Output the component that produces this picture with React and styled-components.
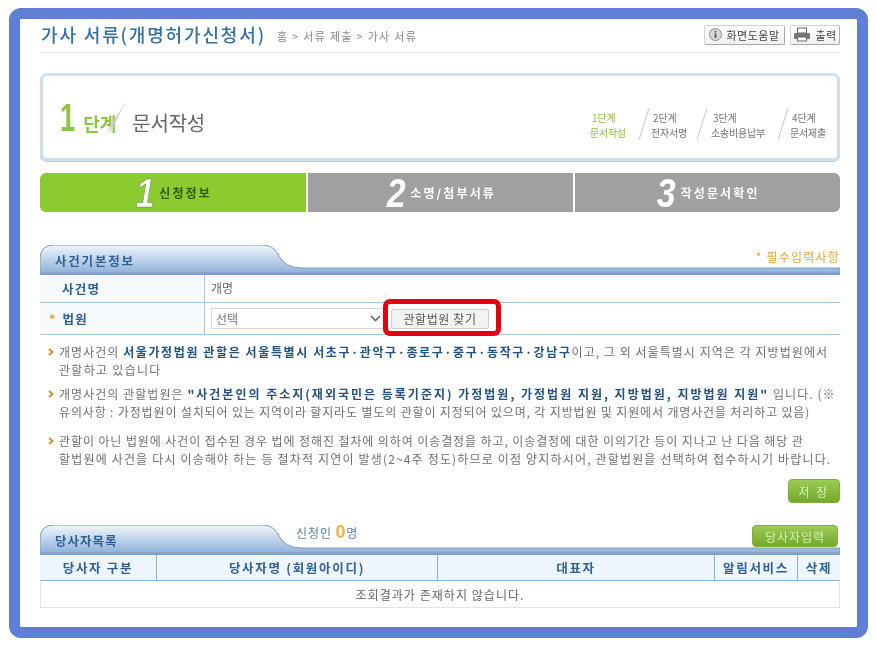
import React from 'react';
import styled, { createGlobalStyle } from 'styled-components';

const FONT = `"Noto Sans CJK KR", "Liberation Sans", sans-serif`;

const GlobalStyle = createGlobalStyle`
    body {
        margin: 0;
        background: #fff;
        font-family: ${FONT};
        overflow: hidden;
    }
`;

const Frame = styled.div`
    box-sizing: border-box;
    width: 859px;
    height: 630px;
    margin: 8px 0 0 9px;
    padding: 0 17px 0 20px;
    border: 11px solid #5f7fd6;
    border-radius: 12px;
    background: #fff;
    position: relative;
    filter: blur(0.4px);
`;

const Header = styled.header`
    display: flex;
    align-items: center;
    height: 33px;
    border-bottom: 1px solid #e6e6e6;
`;

const Title = styled.h1`
    margin: 0 0 4px 1px;
    font-size: 18px;
    font-weight: 500;
    line-height: 26px;
    letter-spacing: 1.85px;
    color: #35719f;
    white-space: nowrap;
`;

const Crumb = styled.span`
    margin-left: 11px;
    font-size: 11px;
    letter-spacing: 1.3px;
    color: #8a8a8a;
    white-space: nowrap;
`;

const HeadButtons = styled.div`
    display: flex;
    gap: 5px;
    margin: 0 0 2px auto;
`;

const HeadButton = styled.button`
    display: flex;
    align-items: center;
    justify-content: center;
    gap: 4px;
    box-sizing: border-box;
    width: ${p => p.$w}px;
    height: 20px;
    padding: 0;
    border: 1px solid #d4d4d4;
    border-right-color: #aaa;
    border-bottom-color: #aaa;
    border-radius: 2px;
    background: linear-gradient(#fff, #f1f1f1);
    font-family: ${FONT};
    font-size: 11px;
    letter-spacing: 0.5px;
    color: #444;
`;

const StepBox = styled.section`
    box-sizing: border-box;
    display: flex;
    justify-content: space-between;
    align-items: center;
    height: 88px;
    margin-top: 20px;
    border: 3px solid #d0e0ec;
    border-radius: 7px;
    background: #fff;
    box-shadow: 0 1px 1px #b9c9d6;
`;

const StepTitle = styled.div`
    display: flex;
    align-items: baseline;
    margin: 2px 0 0 14px;
    position: relative;
`;

const StepNum = styled.span`
    font-family: "Liberation Sans", sans-serif;
    font-size: 38px;
    font-weight: 700;
    color: #8cc63f;
    transform: scaleX(0.72);
    line-height: 40px;
`;

const StepWord = styled.span`
    margin-left: 5px;
    font-size: 18px;
    font-weight: 700;
    letter-spacing: 0;
    color: #8cc63f;
`;

const StepName = styled.span`
    margin-left: 16px;
    font-size: 20px;
    letter-spacing: -0.2px;
    color: #666;
`;

const SlashMark = styled.svg`
    position: absolute;
    left: ${p => p.$x}px;
    top: ${p => p.$y}px;
`;

const StepList = styled.ol`
    display: flex;
    margin: 16px 11px 0 0;
    padding: 0;
    list-style: none;
`;

const StepItem = styled.li`
    position: relative;
    margin-left: ${p => p.$ml}px;
    font-size: 10px;
    line-height: 15px;
    letter-spacing: -0.2px;
    white-space: nowrap;
    color: ${p => (p.$on ? '#8cc63f' : '#777')};
`;

const Tabs = styled.nav`
    display: grid;
    grid-template-columns: 266px 265px 265px;
    gap: 2px;
    height: 39px;
    margin-top: 12px;
`;

const Tab = styled.div`
    display: flex;
    align-items: center;
    justify-content: center;
    gap: 3px;
    background: ${p => (p.$on ? '#8ccb2e' : '#a0a0a0')};
    border-radius: ${p => p.$radius};
    color: ${p => (p.$on ? '#2e5a12' : '#fff')};
    font-size: 12px;
    font-weight: 700;
    letter-spacing: 2.1px;
`;

const TabNum = styled.span`
    font-family: "Liberation Sans", sans-serif;
    font-size: 40px;
    font-weight: 700;
    font-style: italic;
    letter-spacing: 0;
    color: #fff;
    -webkit-text-stroke: ${p => (p.$on ? '0.5px #56803a' : '0')};
    line-height: 38px;
    transform: scaleX(0.85);
`;

const SectionHead = styled.div`
    position: relative;
    display: flex;
    align-items: flex-start;
    height: 30px;
    margin-top: ${p => p.$mt}px;
`;

const HeadShape = styled.svg`
    position: absolute;
    left: 0;
    top: 0;
`;

const SectionTitle = styled.h2`
    position: relative;
    width: 256px;
    margin: 6px 0 0;
    padding-left: 15px;
    box-sizing: border-box;
    font-size: 12.5px;
    font-weight: 700;
    line-height: 20px;
    letter-spacing: ${p => p.$ls}px;
    color: #2d6193;
`;

const Required = styled.span`
    position: relative;
    margin: 3px 0 0 auto;
    font-size: 12px;
    line-height: 18px;
    letter-spacing: 1.2px;
    color: #e5a52e;
`;

const Count = styled.span`
    position: relative;
    margin-top: -2px;
    font-size: 12px;
    line-height: 18px;
    letter-spacing: 0.9px;
    color: #5b7f9b;
`;

const CountNum = styled.b`
    font-family: "Liberation Sans", sans-serif;
    font-size: 18px;
    color: #f0b040;
`;

const GreenButton = styled.button`
    position: relative;
    box-sizing: border-box;
    width: ${p => p.$w}px;
    height: ${p => p.$h}px;
    margin-left: ${p => p.$ml || 0};
    margin-right: ${p => p.$mr || 0}px;
    padding: 0;
    border: 1px solid #7fae3c;
    border-radius: 4px;
    background: linear-gradient(#9ccb56, #72aa2c);
    font-family: ${FONT};
    font-size: 12px;
    letter-spacing: ${p => p.$ls}px;
    color: #d8efb0;
`;

const InfoRow = styled.div`
    display: grid;
    grid-template-columns: 165px 1fr;
    height: ${p => p.$h}px;
    border-bottom: 1px solid ${p => p.$line};
    box-sizing: border-box;
`;

const InfoLabel = styled.div`
    display: flex;
    align-items: center;
    padding-left: ${p => (p.$mark ? 9 : 22)}px;
    border-right: 1px solid #a9c3da;
    background: #f8fbfe;
    font-size: 12.5px;
    font-weight: 700;
    letter-spacing: 1.2px;
    color: #2d6193;
`;

const Mark = styled.span`
    margin-right: 6px;
    color: #e8a33a;
`;

const InfoValue = styled.div`
    position: relative;
    display: flex;
    align-items: center;
    padding: 0 0 ${p => p.$pb || 0}px 6px;
    font-size: 12px;
    color: #666;
`;

const FakeSelect = styled.div`
    display: flex;
    align-items: center;
    justify-content: space-between;
    box-sizing: border-box;
    width: 174px;
    height: 21px;
    padding: 0 3px 0 4px;
    border: 1px solid #d6d6d6;
    font-size: 12px;
    color: #777;
`;

const FindButton = styled.button`
    box-sizing: border-box;
    width: 98px;
    height: 20px;
    margin-left: 6px;
    padding: 0;
    border: 1px solid #ccc;
    border-radius: 2px;
    background: #f3f3f1;
    font-family: ${FONT};
    font-size: 12px;
    letter-spacing: 0.6px;
    color: #555;
`;

const RedBox = styled.div`
    position: absolute;
    left: 178px;
    top: -4px;
    width: 118px;
    height: 37px;
    box-sizing: border-box;
    border: 5px solid #e4000f;
    border-radius: 7px;
`;

const Notes = styled.ul`
    margin: 0;
    padding: 8px 0 0;
    list-style: none;
`;

const Note = styled.li`
    position: relative;
    margin-bottom: ${p => p.$gap}px;
    padding-left: 19px;
    font-size: 12px;
    line-height: 17.5px;
    white-space: nowrap;
    color: #707070;

    b {
        font-weight: 700;
        letter-spacing: ${p => p.$bold}px;
        color: #24527f;
    }
`;

const Line = styled.span`
    display: block;
    letter-spacing: ${p => p.$ls}px;
`;

const Chevron = styled.svg`
    position: absolute;
    left: 8px;
    top: 5px;
`;

const Actions = styled.div`
    display: flex;
    justify-content: flex-end;
    margin-top: 12px;
`;

const ListRow = styled.div`
    display: grid;
    grid-template-columns: 117px 281px 277px 83px 42px;
    box-sizing: border-box;
    height: 26px;
    background: #eef5fc;
    border-bottom: 1px solid #8db0d2;
`;

const ListHead = styled.div`
    display: flex;
    align-items: center;
    justify-content: center;
    border-right: ${p => (p.$last ? 'none' : '1px solid #8db0d2')};
    font-size: 12.5px;
    font-weight: 700;
    letter-spacing: 1.7px;
    color: #2d6193;
`;

const EmptyRow = styled.div`
    display: flex;
    align-items: center;
    justify-content: center;
    box-sizing: border-box;
    height: 27px;
    border: 1px solid #e4e4e4;
    border-top: none;
    font-size: 12px;
    letter-spacing: 1.05px;
    color: #666;
`;

const Shape = ({ id }) => (
    <HeadShape width="800" height="30" viewBox="0 0 800 30">
        <defs>
            <linearGradient id={id} x1="0" y1="0" x2="0" y2="1">
                <stop offset="0" stopColor="#f1f6fb" />
                <stop offset="1" stopColor="#8fb1d9" />
            </linearGradient>
        </defs>
        <path
            d="M0 28V14Q0 0 14 0H222Q233 0 238 9Q244 23 262 23H800V28Z"
            fill={`url(#${id})`}
            stroke="#7d9fc4"
            strokeWidth="1"
        />
        <rect x="0" y="28" width="800" height="2" fill="#7c9fcc" />
    </HeadShape>
);

const Slash = ({ x, y, w = 12, h = 32, color = '#c9c9c9' }) => (
    <SlashMark $x={x} $y={y} width={w} height={h} viewBox={`0 0 ${w} ${h}`}>
        <line x1={w - 1} y1="0" x2="1" y2={h} stroke={color} strokeWidth="1" />
    </SlashMark>
);

// the soft grey stroke between 단계 and 문서작성
const TitleSlash = () => (
    <SlashMark $x={46} $y={0} width="26" height="38" viewBox="0 0 26 38">
        <defs>
            <linearGradient id="titleSlash" x1="0" y1="0" x2="0" y2="1">
                <stop offset="0" stopColor="#ececec" />
                <stop offset="0.7" stopColor="#c8c8c8" />
                <stop offset="1" stopColor="#fff" />
            </linearGradient>
        </defs>
        <path d="M25 0L1 37L6 37Z" fill="url(#titleSlash)" />
    </SlashMark>
);

const InfoIcon = () => (
    <svg width="13" height="13" viewBox="0 0 13 13">
        <circle cx="6.5" cy="6.5" r="6" fill="#d9d9d9" stroke="#8a8a8a" />
        <rect x="5.6" y="5.4" width="1.8" height="4.6" fill="#555" />
        <rect x="5.6" y="2.8" width="1.8" height="1.7" fill="#555" />
    </svg>
);

const PrintIcon = () => (
    <svg width="18" height="15" viewBox="0 0 18 15">
        <rect x="4.5" y="1" width="9" height="5" fill="#fff" stroke="#666" />
        <rect x="1" y="6" width="16" height="6" rx="1" fill="#777" />
        <rect x="4.5" y="10" width="9" height="4" fill="#fff" stroke="#666" />
    </svg>
);

const Bullet = () => (
    <Chevron width="6" height="8" viewBox="0 0 6 8">
        <path d="M1 1L4.5 4L1 7" fill="none" stroke="#c29a2c" strokeWidth="2" />
    </Chevron>
);

const App = () => (
    <>
        <GlobalStyle />
        <Frame>
            <Header>
                <Title>가사 서류(개명허가신청서)</Title>
                <Crumb>홈 &gt; 서류 제출 &gt; 가사 서류</Crumb>
                <HeadButtons>
                    <HeadButton $w={81}><InfoIcon />화면도움말</HeadButton>
                    <HeadButton $w={50}><PrintIcon />출력</HeadButton>
                </HeadButtons>
            </Header>

            <StepBox>
                <StepTitle>
                    <StepNum>1</StepNum>
                    <StepWord>단계</StepWord>
                    <TitleSlash />
                    <StepName>문서작성</StepName>
                </StepTitle>
                <StepList>
                    <StepItem $on $ml={0}>&nbsp;1단계<br />문서작성</StepItem>
                    <StepItem $ml={25}><Slash x={-13} y={-2} />&nbsp;2단계<br />전자서명</StepItem>
                    <StepItem $ml={24}><Slash x={-15} y={-2} />&nbsp;3단계<br />소송비용납부</StepItem>
                    <StepItem $ml={25}><Slash x={-13} y={-2} />&nbsp;4단계<br />문서제출</StepItem>
                </StepList>
            </StepBox>

            <Tabs>
                <Tab $on $radius="6px 0 0 6px"><TabNum $on>1</TabNum>신청정보</Tab>
                <Tab $radius="0"><TabNum>2</TabNum>소명/첨부서류</Tab>
                <Tab $radius="0 6px 6px 0"><TabNum>3</TabNum>작성문서확인</Tab>
            </Tabs>

            <SectionHead $mt={33}>
                <Shape id="caseHead" />
                <SectionTitle $ls={1.8}>사건기본정보</SectionTitle>
                <Required>* 필수입력사항</Required>
            </SectionHead>
            <InfoRow $h={28} $line="#a9c3da">
                <InfoLabel>사건명</InfoLabel>
                <InfoValue $pb={2}>개명</InfoValue>
            </InfoRow>
            <InfoRow $h={32} $line="#a9c3da">
                <InfoLabel $mark><Mark>*</Mark>법원</InfoLabel>
                <InfoValue>
                    <FakeSelect>
                        선택
                        <svg width="11" height="7" viewBox="0 0 11 7">
                            <path d="M1 1L5.5 5.5L10 1" fill="none" stroke="#666" strokeWidth="1.6" />
                        </svg>
                    </FakeSelect>
                    <FindButton>관할법원 찾기</FindButton>
                    <RedBox />
                </InfoValue>
            </InfoRow>

            <Notes>
                <Note $gap={7} $bold={1.6}>
                    <Bullet />
                    <Line $ls={1.05}>개명사건의 <b>서울가정법원 관할은 서울특별시 서초구·관악구·종로구·중구·동작구·강남구</b>이고, 그 외 서울특별시 지역은 각 지방법원에서</Line>
                    <Line $ls={1.3}>관할하고 있습니다</Line>
                </Note>
                <Note $gap={12} $bold={2}>
                    <Bullet />
                    <Line $ls={1.05}>개명사건의 관할법원은 <b>"사건본인의 주소지(재외국민은 등록기준지) 가정법원, 가정법원 지원, 지방법원, 지방법원 지원"</b> 입니다. (※</Line>
                    <Line $ls={0.85}>유의사항 : 가정법원이 설치되어 있는 지역이라 할지라도 별도의 관할이 지정되어 있으며, 각 지방법원 및 지원에서 개명사건을 처리하고 있음)</Line>
                </Note>
                <Note $gap={0} $bold={1}>
                    <Bullet />
                    <Line $ls={0.9}>관할이 아닌 법원에 사건이 접수된 경우 법에 정해진 절차에 의하여 이송결정을 하고, 이송결정에 대한 이의기간 등이 지나고 난 다음 해당 관</Line>
                    <Line $ls={1.17}>할법원에 사건을 다시 이송해야 하는 등 절차적 지연이 발생(2~4주 정도)하므로 이점 양지하시어, 관할법원을 선택하여 접수하시기 바랍니다.</Line>
                </Note>
            </Notes>

            <Actions>
                <GreenButton $w={52} $h={24} $ls={2}>저 장</GreenButton>
            </Actions>

            <SectionHead $mt={22}>
                <Shape id="partyHead" />
                <SectionTitle $ls={1}>당사자목록</SectionTitle>
                <Count>신청인 <CountNum>0</CountNum>명</Count>
                <GreenButton $w={86} $h={22} $ls={0.9} $ml="auto" $mr={2}>당사자입력</GreenButton>
            </SectionHead>
            <ListRow>
                <ListHead>당사자 구분</ListHead>
                <ListHead>당사자명 (회원아이디)</ListHead>
                <ListHead>대표자</ListHead>
                <ListHead>알림서비스</ListHead>
                <ListHead $last>삭제</ListHead>
            </ListRow>
            <EmptyRow>조회결과가 존재하지 않습니다.</EmptyRow>
        </Frame>
    </>
);

export default App;
